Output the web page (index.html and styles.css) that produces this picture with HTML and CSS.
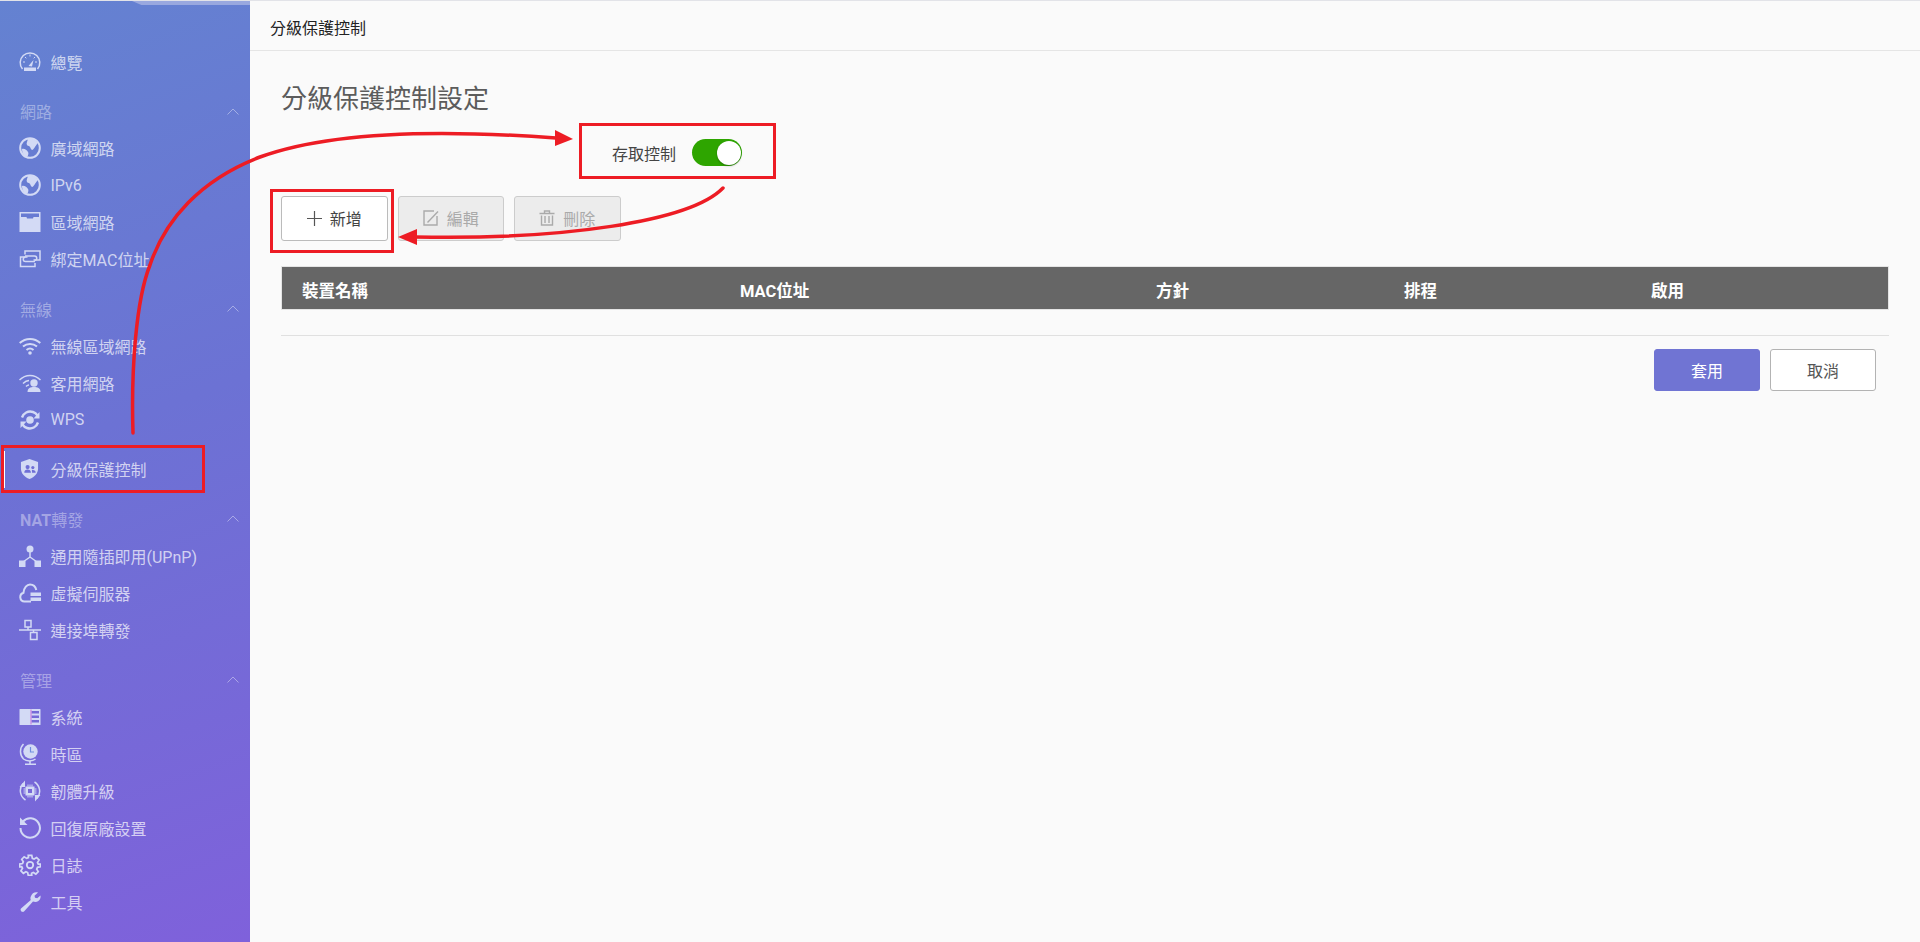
FILE: index.html
```html
<!DOCTYPE html>
<html lang="zh-Hant">
<head>
  <meta charset="UTF-8" />
  <title>分級保護控制</title>
  <link rel="stylesheet" href="styles.css">
</head>
<body>
  <aside class="sidebar">
    <span class="top-tab"></span>
    <nav class="menu">
      <div class="grupo">
        <a class="item"><svg class="ico" viewBox="0 0 22 22"><path class="ln" d="M3.500 18A9.800 9.800 0 1 1 18.500 18"/><path class="ln thin" d="M11 3.500v2M4 11h2M16 11h2M6 6l1.300 1.300M16 6l-1.300 1.300"/><path d="M5 16.500h12V20H5zM9.500 15l5-6-1.500 6.500z"/></svg><span>總覽</span></a>
      </div>
      <div class="grupo">
        <div class="titulo"><span>網路</span><svg class="chev" viewBox="0 0 12 7"><path d="M.5 6.500 6 1l5.500 5.500"/></svg></div>
        <a class="item"><svg class="ico" viewBox="0 0 22 22"><circle class="ln med" cx="11" cy="11" r="9.800"/><path d="M9 2c3-1 7 0 9 3 1 2-1 3-2 5-1 1-2 3-3 3-2-1-1-3-3-4-2 0-3-2-2-4zM3 12c2-1 5 1 6 3 1 1 0 4-1 5-3-1-5-4-5-8z"/></svg><span>廣域網路</span></a>
        <a class="item"><svg class="ico" viewBox="0 0 22 22"><circle class="ln med" cx="11" cy="11" r="9.800"/><path d="M9 2c3-1 7 0 9 3 1 2-1 3-2 5-1 1-2 3-3 3-2-1-1-3-3-4-2 0-3-2-2-4zM3 12c2-1 5 1 6 3 1 1 0 4-1 5-3-1-5-4-5-8z"/></svg><span>IPv6</span></a>
        <a class="item"><svg class="ico" viewBox="0 0 22 22"><path d="M.5 1h21v20H.5zM2 2.500V6h5.500v0L8 7.500h6L14.500 6H20V2.500z" fill-rule="evenodd"/></svg><span>區域網路</span></a>
        <a class="item"><svg class="ico" viewBox="0 0 22 22"><path class="ln" d="M6 6.500V3h15v9h-6.500M16 15v3.500H1.500V9h7"/><path class="ln" d="M6 8h9.500a2 2 0 0 1 0 4.500M16 13.500H6.500a2 2 0 0 1 0-4.500"/></svg><span>綁定MAC位址</span></a>
      </div>
      <div class="grupo">
        <div class="titulo"><span>無線</span><svg class="chev" viewBox="0 0 12 7"><path d="M.5 6.500 6 1l5.500 5.500"/></svg></div>
        <a class="item"><svg class="ico" viewBox="0 0 22 22"><path class="ln med" d="M.7 8c6-5.500 14.600-5.500 20.600 0M4 11.500c4-3.500 10-3.500 14 0M7.500 15c2-1.700 5-1.700 7 0"/><circle cx="11" cy="18" r="1.800"/></svg><span>無線區域網路</span></a>
        <a class="item"><svg class="ico" viewBox="0 0 22 22"><path class="ln" d="M.5 8c6-6 15-6 21 0M4 11.500c2-2 4-3 6-3M7 14.500c1-1 2-1.500 3-1.500"/><circle cx="15" cy="11" r="3.700"/><path d="M8.500 20c0-4 3-5 6.500-5s6.500 1 6.500 5z"/></svg><span>客用網路</span></a>
        <a class="item"><svg class="ico" viewBox="0 0 22 22"><circle cx="11" cy="11" r="3.800"/><path class="ln wide" d="M3 8.500C4.500 4 9 1.500 14 3c2 .6 3.500 2 4.500 3.500M19 13.500C17.500 18 13 20.500 8 19c-2-.6-3.500-2-4.500-3.500"/><path d="M20.500 3v6.500H14.500zM1.500 19v-6.500h6z"/></svg><span>WPS</span></a>
      </div>
      <div class="grupo">
        <a class="item activo"><svg class="ico small" viewBox="0 0 20 22"><path d="M10 .5 19 3.500v7c0 5-3.500 9-9 11-5.500-2-9-6-9-11v-7z"/><circle class="hueco" cx="8" cy="9" r="2.200"/><circle class="hueco" cx="13.500" cy="9.500" r="1.700"/><path class="hueco" d="M4.500 15c0-2.500 1.500-3.500 3.500-3.500s3.500 1 3.500 3.500zM12.500 12h1c2 0 3 1 3 3h-3.800c0-1-.2-2-.2-3z"/></svg><span>分級保護控制</span></a>
      </div>
      <div class="grupo">
        <div class="titulo"><span><b>NAT</b>轉發</span><svg class="chev" viewBox="0 0 12 7"><path d="M.5 6.500 6 1l5.500 5.500"/></svg></div>
        <a class="item"><svg class="ico" viewBox="0 0 22 22"><circle cx="11" cy="4" r="3.500"/><path d="M0 15.500h6.500V22H0zM15.500 15.500H22V22h-6.500z"/><path class="ln" d="M11 6v6M11 12l-7 5M11 12l7 5"/></svg><span>通用隨插即用(UPnP)</span></a>
        <a class="item"><svg class="ico" viewBox="0 0 22 22"><path class="ln med" d="M12 19.500H5.500a4.500 4.500 0 0 1-1-8.800C5 5.500 8 2.500 11 2.500c3 0 5.500 2 6.300 5.500"/><path d="M11.500 10.500H22V14H11.500zM11.500 15.500H22V19H11.500z"/></svg><span>虛擬伺服器</span></a>
        <a class="item"><svg class="ico" viewBox="0 0 22 22"><path class="ln" d="M6 1.500h6V8H6zM11.500 13.500h6.500v7h-6.500zM9 8v3M14.500 11v2.500M0 11h22"/></svg><span>連接埠轉發</span></a>
      </div>
      <div class="grupo">
        <div class="titulo"><span>管理</span><svg class="chev" viewBox="0 0 12 7"><path d="M.5 6.500 6 1l5.500 5.500"/></svg></div>
        <a class="item"><svg class="ico" viewBox="0 0 22 22"><path d="M1 3Q.5 3 .5 3.500v15q0 .5.500.5h20q.5 0 .5-.5v-15q0-.5-.5-.5zM12.500 5h7.500v2.500h-7.500zM12.500 9.500h7.500v2.500h-7.500zM12.500 14h7.500v2.500h-7.500z" fill-rule="evenodd"/><path class="ln rosa" d="M12 3.500v15"/></svg><span>系統</span></a>
        <a class="item"><svg class="ico" viewBox="0 0 22 22"><circle cx="11.500" cy="8.500" r="7.200"/><path class="ln" d="M4.500 1c-4 4-4 11 0 15 3 2.500 9 2.500 12 0M11 18.500v2.500M6 21.200h11"/><path class="ln manos" d="M11.500 4v5H15"/></svg><span>時區</span></a>
        <a class="item"><svg class="ico" viewBox="0 0 22 22"><path class="ln" d="M15.500 2C21 5.500 22.500 13 18 18.500M6.500 20C1 16.500-.5 9 4 3.500"/><path d="M6 .5v6.500H.5zM16 21.500V15h5.500z"/><path d="M6.500 6.500h9v9h-9zM9 9v4h4V9z" fill-rule="evenodd"/><path class="ln thin" d="M9 4.500v2M11 4.500v2M13 4.500v2M9 15.500v2M11 15.500v2M13 15.500v2M4.500 9h2M4.500 11h2M4.500 13h2M15.500 9h2M15.500 11h2M15.500 13h2"/></svg><span>韌體升級</span></a>
        <a class="item"><svg class="ico" viewBox="0 0 22 22"><path class="ln med" d="M4 4.500A9.700 9.700 0 1 1 1.500 11"/><path d="M1 .5v7.500h7.500z"/></svg><span>回復原廠設置</span></a>
        <a class="item"><svg class="ico" viewBox="0 0 24 24"><circle class="ln med" cx="12" cy="12" r="3.500"/><path class="ln med" d="M10 1h4l.7 3.300 2 .9 2.900-1.800 2.800 2.800-1.800 2.900.9 2L23.900 11v3l-3.300.7-.9 2 1.800 2.900-2.800 2.800-2.900-1.800-2 .9L14 23.900h-4l-.7-3.300-2-.9-2.900 1.800-2.800-2.800 1.800-2.900-.9-2L.100 14v-3l3.300-.7.9-2L2.500 5.400l2.800-2.800 2.900 1.800 2-.9z" transform="matrix(.95 0 0 .95 .6 .6)"/></svg><span>日誌</span></a>
        <a class="item"><svg class="ico" viewBox="0 0 22 22"><path d="M21.500 4.500c.5 3-1 6-5 6.500-1 0-2-.2-2.500-.5L5 20.500c-1.500 1.500-4.500-1-3-3l9.800-8.500c-.5-1-.5-2.500 0-3.500C13 2 16 .5 19 1.500l-3.500 3.300.5 2 2.200.5z"/></svg><span>工具</span></a>
      </div>
    </nav>
  </aside>

  <main class="contenido">
    <header class="barra">分級保護控制</header>
    <section class="panel">
      <h1>分級保護控制設定</h1>
      <div class="acceso">
        <label>存取控制</label>
        <span class="switch"><i></i></span>
      </div>
      <div class="acciones">
        <button class="btn"><svg class="btn-ico" viewBox="0 0 15 15"><path d="M7.500 0v15M0 7.500h15"/></svg>新增</button>
        <button class="btn off"><svg class="btn-ico big" viewBox="0 0 16 16"><path d="M11 1H1v14h13V6"/><path d="M4.500 12.500 15 1.500"/></svg>編輯</button>
        <button class="btn off"><svg class="btn-ico big" viewBox="0 0 16 16"><path d="M.5 3.500h15M5.500 3.500V1h5v2.500M2.500 5.500V15h11V5.500M6 6v7M10 6v7"/></svg>刪除</button>
      </div>
      <div class="tabla">
        <span>裝置名稱</span>
        <span>MAC位址</span>
        <span>方針</span>
        <span>排程</span>
        <span>啟用</span>
      </div>
      <div class="pie">
        <button class="btn-form azul">套用</button>
        <button class="btn-form">取消</button>
      </div>
    </section>
  </main>

  <svg class="marcas" viewBox="0 0 1920 942">
    <rect x="580.500" y="124.500" width="194" height="53"/>
    <rect x="271.500" y="190.500" width="121" height="61"/>
    <rect x="2.500" y="446.500" width="201" height="45"/>
    <path class="flecha" d="M133 433C131 370 136 300 150 265C165 220 200 180 260 157C320 135 420 128 556 138"/>
    <path class="flecha" d="M723 188C690 222 560 240 415 237"/>
    <polygon points="573,139 555,130 555,146"/>
    <polygon points="398,237 417,229 417,245"/>
  </svg>
</body>
</html>
```

FILE: styles.css
```css
* {
  box-sizing: border-box;
}

body {
  margin: 0;
  height: 942px;
  display: flex;
  overflow: hidden;
  position: relative;
  background-color: #fafafa;
  font-family: Roboto, "Noto Sans CJK TC", sans-serif;
  font-size: 16px;
  color: #333;
}

.sidebar {
  width: 250px;
  flex: none;
  position: relative;
  padding-top: 42px;
  border-top: 1px solid #e2e3e8;
  background: linear-gradient(160deg, #6482d1 0%, #6c72d4 45%, #7f61db 100%);
}

.top-tab {
  position: absolute;
  top: 0;
  left: 132px;
  right: 0;
  height: 4px;
  clip-path: polygon(0 0, 100% 0, 100% 100%, 8% 100%);
  background-color: #99a8df;
}

.grupo {
  margin-bottom: 12.500px;
}

.titulo {
  display: flex;
  justify-content: space-between;
  align-items: center;
  height: 37px;
  padding: 0 11px 0 20px;
  color: rgba(255, 255, 255, 0.38);
}

.chev {
  width: 12px;
  height: 7px;
  fill: none;
  stroke: rgba(255, 255, 255, 0.4);
  stroke-width: 1;
}

.item {
  display: flex;
  align-items: center;
  height: 37.050px;
  padding-left: 19px;
  color: rgba(255, 255, 255, 0.7);
  position: relative;
}

.item span {
  margin-left: 9.500px;
}

.ico {
  width: 22px;
  height: 22px;
  fill: #d3daf5;
  flex: none;
}

.ico.small {
  width: 19px;
  margin: 0 2px 0 1px;
}

.ln {
  fill: none;
  stroke: #d3daf5;
  stroke-width: 1.500;
}

.ln.thin {
  stroke-width: 1;
}

.ln.med {
  stroke-width: 2;
}

.ln.wide {
  stroke-width: 2.400;
}

.ln.rosa {
  stroke: #c774dc;
  stroke-width: 1;
}

.ln.manos {
  stroke: #6f8fe0;
  stroke-width: 1.200;
}

.hueco {
  fill: #6f6fd6;
}

.activo::before {
  content: "";
  position: absolute;
  left: 3px;
  top: 0;
  bottom: 0;
  width: 2px;
  background-color: #fff;
}

.contenido {
  flex: 1;
  border-top: 1px solid #e2e3e8;
}

.barra {
  height: 50px;
  padding: 0 20px;
  line-height: 56px;
  border-bottom: 1px solid #e5e5e5;
  color: #222;
}

.panel {
  padding: 0 31px;
}

h1 {
  margin: 0;
  padding-top: 28px;
  height: 69px;
  font-size: 26px;
  font-weight: 400;
  line-height: 40px;
  color: #5c5c5c;
}

.acceso {
  display: flex;
  align-items: center;
  height: 76px;
  padding: 0 0 11px 331px;
}

.acceso label {
  width: 80px;
  color: #444;
}

.switch {
  width: 50px;
  height: 27px;
  border-radius: 14px;
  background-color: #2ea500;
  padding: 1.500px;
  display: flex;
  justify-content: flex-end;
}

.switch i {
  width: 24px;
  height: 24px;
  border-radius: 50%;
  background-color: #fff;
  box-shadow: 0 1px 2px rgba(0, 0, 0, 0.3);
}

.acciones {
  display: flex;
  gap: 10px;
}

.btn {
  width: 106.500px;
  height: 44.500px;
  display: flex;
  align-items: center;
  justify-content: center;
  gap: 8px;
  border: 1px solid #bbb;
  border-radius: 3px;
  background-color: #fff;
  font: inherit;
  color: #444;
}

.btn.off {
  background-color: #ececec;
  border-color: #ccc;
  color: #aaa;
}

.btn-ico {
  width: 15px;
  height: 15px;
  fill: none;
  stroke: #555;
  stroke-width: 1.200;
}

.btn-ico.big {
  width: 16px;
  height: 16px;
  stroke: #aaa;
  stroke-width: 1.400;
}

.tabla {
  display: grid;
  grid-template-columns: 438px 416px 248px 247px 1fr;
  align-items: center;
  height: 44px;
  margin-top: 25.500px;
  padding: 3px 0 0 20px;
  background-color: #666;
  border: 1px solid #e4e4e4;
  font-size: 16.500px;
  font-weight: 700;
  color: #fff;
}

.pie {
  display: flex;
  justify-content: flex-end;
  gap: 10px;
  height: 57px;
  margin-top: 25px;
  padding: 13px 13px 0 0;
  border-top: 1px solid #e0e0e0;
}

.btn-form {
  width: 106px;
  height: 42px;
  border: 1px solid #b3b3b3;
  border-radius: 3px;
  background-color: #fff;
  font: inherit;
  color: #555;
}

.btn-form.azul {
  background-color: #7074d3;
  border-color: #7074d3;
  color: #fff;
}

.marcas {
  position: absolute;
  left: 0;
  top: 0;
  width: 1920px;
  height: 942px;
  pointer-events: none;
  fill: none;
  stroke: #ed1c24;
  stroke-width: 3;
}

.marcas .flecha {
  stroke-width: 3.500;
  stroke-linecap: round;
}

.marcas polygon {
  fill: #ed1c24;
  stroke: none;
}
```
